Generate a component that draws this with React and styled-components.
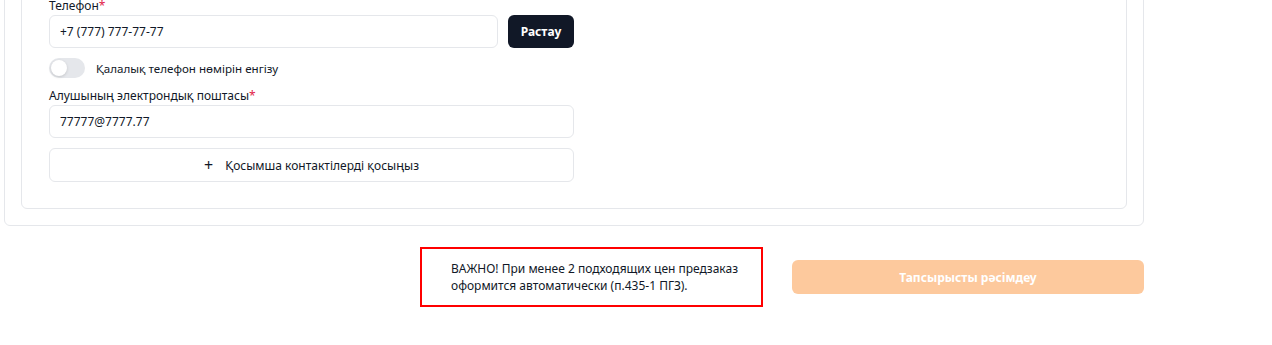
import React from "react";
import styled, { createGlobalStyle } from "styled-components";

const GlobalStyle = createGlobalStyle`
  * {
    box-sizing: border-box;
  }
  body {
    margin: 0;
    background: #ffffff;
    font-family: "Noto Sans", "Open Sans", sans-serif;
    color: #111827;
    overflow: hidden;
  }
`;

export default function App() {
  return (
    <>
      <GlobalStyle />
      <OuterCard>
        <InnerCard>
          <Form>
            <Field>
              <Label>
                Телефон<Required>*</Required>
              </Label>
              <Row>
                <Input $grow defaultValue="+7 (777) 777-77-77" />
                <DarkButton>Растау</DarkButton>
              </Row>
            </Field>

            <ToggleRow>
              <Toggle>
                <Knob />
              </Toggle>
              <ToggleText>Қалалық телефон нөмірін енгізу</ToggleText>
            </ToggleRow>

            <Field>
              <Label>
                Алушының электрондық поштасы<Required>*</Required>
              </Label>
              <Input defaultValue="77777@7777.77" />
            </Field>

            <GhostButton>
              <Plus>+</Plus>
              Қосымша контактілерді қосыңыз
            </GhostButton>
          </Form>
        </InnerCard>
      </OuterCard>

      <Footer>
        <Notice>
          ВАЖНО! При менее 2 подходящих цен предзаказ оформится автоматически
          (п.435-1 ПГЗ).
        </Notice>
        <SubmitButton disabled>Тапсырысты рәсімдеу</SubmitButton>
      </Footer>
    </>
  );
}

const OuterCard = styled.section`
  width: 1140px;
  margin: -47px 0 0 4px;
  padding: 16px;
  border: 1px solid #e5e7eb;
  border-radius: 6px;
`;

const InnerCard = styled.div`
  padding: 27px 27px 26px 27px;
  border: 1px solid #e5e7eb;
  border-radius: 6px;
`;

const Form = styled.div`
  width: 525px;
  display: flex;
  flex-direction: column;
  gap: 10px;
`;

const Field = styled.div`
  display: flex;
  flex-direction: column;
  gap: 1px;
`;

const Label = styled.label`
  font-size: 12px;
  line-height: 16px;
  color: #111827;
`;

const Required = styled.span`
  color: #e11d48;
`;

const Row = styled.div`
  display: flex;
  gap: 10px;
`;

const Input = styled.input`
  ${({ $grow }) => ($grow ? "flex: 1;" : "width: 100%;")}
  min-width: 0;
  height: 33px;
  padding: 0 10px;
  border: 1px solid #e5e7eb;
  border-radius: 6px;
  font-family: inherit;
  font-size: 12px;
  color: #111827;
  background: #fff;
  outline: none;
`;

const DarkButton = styled.button`
  width: 66px;
  height: 33px;
  border: none;
  border-radius: 6px;
  background: #111827;
  color: #ffffff;
  font-family: inherit;
  font-size: 12px;
  font-weight: 700;
`;

const ToggleRow = styled.div`
  display: flex;
  align-items: center;
  gap: 11px;
`;

const Toggle = styled.div`
  position: relative;
  width: 36px;
  height: 20px;
  border-radius: 10px;
  background: #e5e7eb;
`;

const Knob = styled.span`
  position: absolute;
  top: 2px;
  left: 2px;
  width: 16px;
  height: 16px;
  border-radius: 50%;
  background: #ffffff;
  box-shadow: 0 1px 3px rgba(0, 0, 0, 0.15);
`;

const ToggleText = styled.span`
  font-size: 11.6px;
  color: #111827;
`;

const GhostButton = styled.button`
  height: 34px;
  display: flex;
  align-items: center;
  justify-content: center;
  gap: 12px;
  border: 1px solid #e5e7eb;
  border-radius: 6px;
  background: #ffffff;
  font-family: inherit;
  font-size: 12px;
  color: #111827;
`;

const Plus = styled.span`
  font-size: 16px;
  line-height: 1;
`;

const Footer = styled.footer`
  width: 1140px;
  margin: 21px 0 0 4px;
  display: flex;
  justify-content: flex-end;
  align-items: center;
  gap: 29px;
`;

const Notice = styled.p`
  width: 343px;
  margin: 0;
  padding: 11px 20px 11px 29px;
  border: 2px solid #ff0000;
  font-size: 12px;
  line-height: 17px;
  color: #111827;
`;

const SubmitButton = styled.button`
  width: 352px;
  height: 34px;
  border: none;
  border-radius: 6px;
  background: #fdc99d;
  color: #ffffff;
  font-family: inherit;
  font-size: 12px;
  font-weight: 700;
`;
